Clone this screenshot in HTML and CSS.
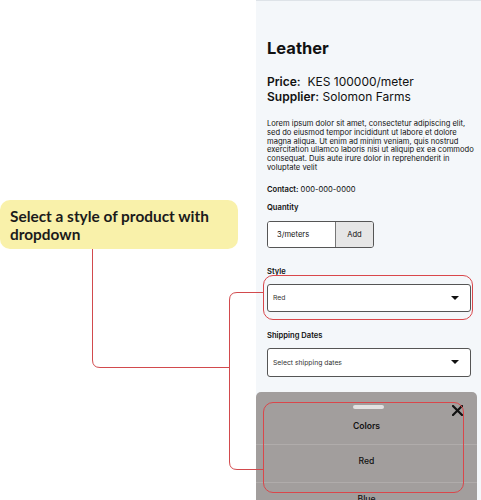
FILE: index.html
```html
<!DOCTYPE html>
<html lang="en">

<head>
    <meta charset="UTF-8">
    <title>Product details - style dropdown</title>
    <meta name="viewport" content="width=device-width, initial-scale=1">
    <link rel="stylesheet" href="styles.css">
</head>

<body>
    <div id="notes">
        <div class="callout">Select a style of product with dropdown</div>
    </div>

    <div id="panel">
        <h1 class="title">Leather</h1>
        <p class="meta"><b>Price:</b>&nbsp; KES 100000/meter</p>
        <p class="meta"><b>Supplier:</b> Solomon Farms</p>

        <p class="desc">Lorem ipsum dolor sit amet, consectetur adipiscing elit, sed do eiusmod tempor incididunt ut
            labore et dolore magna aliqua. Ut enim ad minim veniam, quis nostrud exercitation ullamco laboris nisi ut
            aliquip ex ea commodo consequat. Duis aute irure dolor in reprehenderit in voluptate velit</p>

        <p class="contact"><b>Contact:</b> 000-000-0000</p>

        <p class="label">Quantity</p>
        <div class="qty">
            <span class="qty-value">3/meters</span>
            <span class="qty-add">Add</span>
        </div>

        <p class="label label-gap">Style</p>
        <div class="select select-style">
            <span>Red</span>
            <span class="caret"></span>
        </div>

        <p class="label label-gap">Shipping Dates</p>
        <div class="select select-dates">
            <span>Select shipping dates</span>
            <span class="caret"></span>
        </div>

        <div class="sheet">
            <div class="handle"></div>
            <svg class="close" width="11" height="11" viewBox="0 0 11 11">
                <path d="M1 1 L10 10 M10 1 L1 10" stroke="#111" stroke-width="2.2" stroke-linecap="round" />
            </svg>
            <div class="sheet-title">Colors</div>
            <div class="option">Red</div>
            <div class="option">Blue</div>
        </div>

        <div class="mark mark-style"></div>
        <div class="mark mark-sheet"></div>
    </div>

    <!-- connector lines from the note to the highlighted parts -->
    <svg class="links" width="481" height="500" viewBox="0 0 481 500">
        <path d="M92.5 249 V360 Q92.5 367.5 100 367.5 H229.5" />
        <path d="M263 292.5 H237 Q229.5 292.5 229.5 300 V462 Q229.5 469.5 237 469.5 H263" />
    </svg>
</body>

</html>
```

FILE: styles.css
```css
* {
    margin: 0;
    padding: 0;
    box-sizing: border-box;
}

body {
    width: 481px;
    height: 500px;
    overflow: hidden;
    display: flex;
    background: #fff;
    color: #111;
    font-family: Inter, 'Liberation Sans', sans-serif;
    position: relative;
}

#notes {
    width: 256px;
    padding-top: 200px;
}

.callout {
    width: 238px;
    height: 49px;
    padding: 7px 10px;
    background-color: #F9F1AA;
    border-radius: 10px;
    font-family: Lato, sans-serif;
    font-weight: 700;
    font-size: 15.4px;
    line-height: 18px;
    color: #1b1b1b;
}

#panel {
    position: relative;
    width: 225px;
    height: 500px;
    padding: 37px 6px 0 11px;
    background-color: #F4F7FA;
    border-top: 1px solid #DEE3E8;
}

.title {
    font-size: 16.5px;
    font-weight: 700;
    line-height: 20px;
}

.meta {
    font-size: 12px;
    line-height: 15px;
}

.title + .meta {
    margin-top: 16px;
}

.meta b,
.contact b {
    font-weight: 600;
}

.desc {
    margin-top: 16px;
    font-size: 7.6px;
    line-height: 8.8px;
    width: 208px;
}

.contact {
    margin-top: 12px;
    font-size: 7.6px;
    line-height: 10px;
}

.label {
    margin-top: 8px;
    font-size: 7.6px;
    font-weight: 600;
    line-height: 10px;
}

.label-gap {
    margin-top: 19px;
}

.qty {
    margin-top: 8px;
    width: 107px;
    height: 27px;
    display: flex;
    border: 1px solid #555;
    border-radius: 3px;
    overflow: hidden;
    font-size: 7.6px;
}

.qty-value {
    flex-grow: 1;
    background: #fff;
    padding-left: 9px;
    display: flex;
    align-items: center;
}

.qty-add {
    width: 38px;
    background: #E6E6E6;
    border-left: 1px solid #777;
    display: flex;
    align-items: center;
    justify-content: center;
}

.select {
    margin-top: 7px;
    width: 204px;
    height: 28px;
    background: #fff;
    border: 1px solid #555;
    border-radius: 3px;
    padding: 0 11px 0 5px;
    display: flex;
    align-items: center;
    justify-content: space-between;
    font-size: 6.8px;
    color: #333;
}

.select-dates {
    height: 29px;
}

.caret {
    width: 0;
    height: 0;
    border-left: 4.5px solid transparent;
    border-right: 4.5px solid transparent;
    border-top: 4.5px solid #111;
}

.sheet {
    position: absolute;
    left: 0;
    top: 391px;
    width: 221px;
    height: 130px;
    padding-top: 16px;
    background-color: #A29E9D;
    border-radius: 5px 5px 0 0;
    text-align: center;
    font-size: 8.6px;
}

.handle {
    position: absolute;
    left: 97px;
    top: 13px;
    width: 31px;
    height: 4px;
    border-radius: 2px;
    background: #E2E2E2;
}

.close {
    position: absolute;
    left: 196px;
    top: 13px;
}

.sheet-title {
    height: 36px;
    line-height: 36px;
    font-weight: 600;
}

.option {
    height: 38px;
    line-height: 32px;
    font-weight: 500;
    border-top: 1px solid #B0ACAB;
}

.mark {
    position: absolute;
    left: 7px;
    border: 1px solid #D9474B;
    border-radius: 10px;
}

.mark-style {
    top: 274px;
    width: 210px;
    height: 45px;
}

.mark-sheet {
    top: 401px;
    width: 201px;
    height: 91px;
}

.links {
    position: absolute;
    left: 0;
    top: 0;
    pointer-events: none;
}

.links path {
    fill: none;
    stroke: #D24A4D;
    stroke-width: 1;
}
```
